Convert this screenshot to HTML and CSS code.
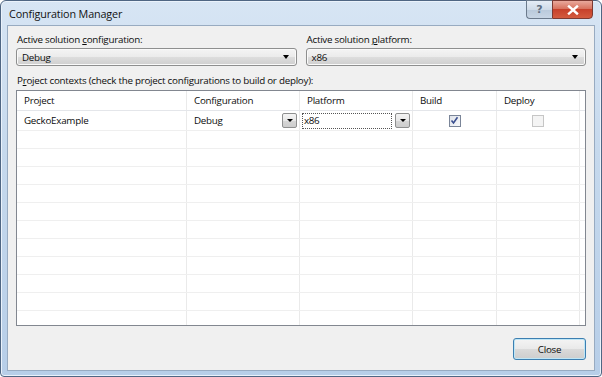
FILE: index.html
```html
<!DOCTYPE html>
<html>
<head>
<meta charset="utf-8">
<link rel="stylesheet" href="styles.css">
</head>
<body>
<div class="window">
  <div class="titlebar">
    <span class="title">Configuration Manager</span>
    <div class="caption">
      <div class="cap-btn help">?</div>
      <div class="cap-btn close">
        <svg width="12" height="10" viewBox="0 0 12 10"><path d="M2 1.5 L10 8.5 M10 1.5 L2 8.5" stroke="#fff" stroke-width="2.4" stroke-linecap="square"/></svg>
      </div>
    </div>
  </div>
  <div class="client">
    <div class="top-row">
      <div class="field">
        <div class="label">Active solution <u>c</u>onfiguration:</div>
        <div class="combo"><span>Debug</span><span class="arrow"></span></div>
      </div>
      <div class="field">
        <div class="label">Active solution <u>p</u>latform:</div>
        <div class="combo"><span>x86</span><span class="arrow"></span></div>
      </div>
    </div>
    <div class="label ctx">P<u>r</u>oject contexts (check the project configurations to build or deploy):</div>
    <div class="grid">
      <div class="row head">
        <div class="cell">Project</div>
        <div class="cell">Configuration</div>
        <div class="cell">Platform</div>
        <div class="cell">Build</div>
        <div class="cell">Deploy</div>
        <div class="cell"></div>
      </div>
      <div class="row first">
        <div class="cell">GeckoExample</div>
        <div class="cell split"><span>Debug</span><span class="dd"><span class="arrow"></span></span></div>
        <div class="cell split"><span class="edit">x86</span><span class="dd"><span class="arrow"></span></span></div>
        <div class="cell center"><span class="check on"><svg width="9" height="9" viewBox="0 0 9 9"><path d="M1.5 4.5 L3.5 7 L7.5 1.2" stroke="#3a4f8f" stroke-width="1.6" fill="none"/></svg></span></div>
        <div class="cell center"><span class="check off"></span></div>
        <div class="cell"></div>
      </div>
      <div class="row"><div class="cell"></div><div class="cell"></div><div class="cell"></div><div class="cell"></div><div class="cell"></div><div class="cell"></div></div>
      <div class="row"><div class="cell"></div><div class="cell"></div><div class="cell"></div><div class="cell"></div><div class="cell"></div><div class="cell"></div></div>
      <div class="row"><div class="cell"></div><div class="cell"></div><div class="cell"></div><div class="cell"></div><div class="cell"></div><div class="cell"></div></div>
      <div class="row"><div class="cell"></div><div class="cell"></div><div class="cell"></div><div class="cell"></div><div class="cell"></div><div class="cell"></div></div>
      <div class="row"><div class="cell"></div><div class="cell"></div><div class="cell"></div><div class="cell"></div><div class="cell"></div><div class="cell"></div></div>
      <div class="row"><div class="cell"></div><div class="cell"></div><div class="cell"></div><div class="cell"></div><div class="cell"></div><div class="cell"></div></div>
      <div class="row"><div class="cell"></div><div class="cell"></div><div class="cell"></div><div class="cell"></div><div class="cell"></div><div class="cell"></div></div>
      <div class="row"><div class="cell"></div><div class="cell"></div><div class="cell"></div><div class="cell"></div><div class="cell"></div><div class="cell"></div></div>
      <div class="row"><div class="cell"></div><div class="cell"></div><div class="cell"></div><div class="cell"></div><div class="cell"></div><div class="cell"></div></div>
      <div class="row"><div class="cell"></div><div class="cell"></div><div class="cell"></div><div class="cell"></div><div class="cell"></div><div class="cell"></div></div>
      <div class="row"><div class="cell"></div><div class="cell"></div><div class="cell"></div><div class="cell"></div><div class="cell"></div><div class="cell"></div></div>
    </div>
    <div class="footer">
      <div class="btn">Close</div>
    </div>
  </div>
</div>
</body>
</html>
```

FILE: styles.css
```css
* { box-sizing: border-box; }
html, body { margin: 0; padding: 0; }
body {
  width: 602px;
  height: 377px;
  overflow: hidden;
  font-family: "Open Sans", "Noto Sans", sans-serif;
  font-size: 9.8px;
  letter-spacing: -0.25px;
  color: #0c0c0c;
  background: #fff;
}
.window {
  width: 602px;
  height: 377px;
  border: 1px solid #4f6683;
  border-radius: 6px 6px 4px 4px;
  background: linear-gradient(180deg, #d7e5f4 0%, #c6d9ed 40%, #b7cee8 100%);
  display: flex;
  flex-direction: column;
  box-shadow: inset 0 0 0 1px #eaf2fb;
}
.titlebar {
  height: 24px;
  display: flex;
  align-items: flex-start;
  justify-content: space-between;
  padding-left: 8px;
  flex: none;
}
.title {
  margin-top: 5px;
  font-size: 10.8px;
  letter-spacing: -0.15px;
  color: #111;
}
.caption {
  display: flex;
  margin-right: 8px;
  margin-top: -1px;
}
.cap-btn {
  height: 19px;
  border: 1px solid #6b7a8c;
  display: flex;
  align-items: center;
  justify-content: center;
}
.help {
  width: 26px;
  border-radius: 0 0 0 4px;
  border-right: none;
  background: linear-gradient(180deg, #e5edf6 0%, #cfdbe8 50%, #b9c9db 51%, #c8d6e5 100%);
  color: #5f6f82;
  font-size: 11px;
  font-weight: bold;
  letter-spacing: 0;
  font-family: "DejaVu Sans", sans-serif;
}
.close {
  width: 41px;
  border-radius: 0 0 4px 0;
  border-color: #7d3a32;
  background: linear-gradient(180deg, #e9a99c 0%, #d8735f 45%, #c7412b 50%, #d45b3f 100%);
}
.client {
  flex: 1;
  margin: 0 6px 6px 6px;
  background: #f0f0f0;
  border: 1px solid #98abc1;
  padding: 6px 8px 10px 8px;
  display: flex;
  flex-direction: column;
}
.top-row {
  display: flex;
  gap: 9px;
}
.field {
  flex: 1;
  display: flex;
  flex-direction: column;
}
.label {
  height: 15px;
  line-height: 15px;
  padding-left: 1px;
  white-space: nowrap;
}
.combo {
  margin-top: 1px;
  height: 18px;
  border: 1px solid #8e8f8f;
  border-radius: 3px;
  background: linear-gradient(180deg, #f4f4f4 0%, #ebebeb 50%, #dddddd 51%, #cfcfcf 100%);
  display: flex;
  align-items: center;
  justify-content: space-between;
  padding: 0 7px 0 5px;
  box-shadow: inset 0 0 0 1px #fafafa;
}
.arrow {
  width: 0;
  height: 0;
  border-left: 3.5px solid transparent;
  border-right: 3.5px solid transparent;
  border-top: 4px solid #000;
}
.ctx {
  margin-top: 7px;
}
.grid {
  margin-top: 2px;
  height: 236px;
  border: 1px solid #828790;
  background: #fff;
  overflow: hidden;
  display: flex;
  flex-direction: column;
}
.row {
  display: grid;
  grid-template-columns: 170px 113px 113px 84px 83px 1fr;
  height: 18px;
  flex: none;
  border-bottom: 1px solid #efefef;
}
.row.head {
  height: 20px;
  border-bottom: 1px solid #e4e6ea;
}
.row.first { height: 20px; }
.cell {
  border-right: 1px solid #eaeaea;
  display: flex;
  align-items: center;
  padding-left: 7px;
  white-space: nowrap;
}
.cell:last-child { border-right: none; }
.split {
  justify-content: space-between;
  padding-right: 2px;
}
.first .split:nth-child(3) { padding-left: 2px; }
.dd {
  width: 15px;
  height: 15px;
  border: 1px solid #8e8f8f;
  border-radius: 2px;
  background: linear-gradient(180deg, #f4f4f4 0%, #e8e8e8 50%, #d6d6d6 51%, #cdcdcd 100%);
  display: flex;
  align-items: center;
  justify-content: center;
}
.dd .arrow {
  border-left-width: 3px;
  border-right-width: 3px;
  border-top-width: 3.5px;
}
.edit {
  width: 90px;
  height: 16px;
  border: 1px dotted #555;
  display: flex;
  align-items: center;
  padding-left: 1px;
  letter-spacing: -0.4px;
}
.center { justify-content: center; padding-left: 0; }
.check {
  width: 12px;
  height: 12px;
  border: 1px solid #8f8f8f;
  display: flex;
  align-items: center;
  justify-content: center;
}
.check.on {
  background: linear-gradient(135deg, #dfe3ea 0%, #f7f8fa 100%);
  border-color: #7a8598;
}
.check.off {
  border-color: #c6c6c6;
  background: #f4f4f4;
}
.footer {
  display: flex;
  justify-content: flex-end;
  margin-top: 12px;
}
.btn {
  width: 73px;
  height: 22px;
  border: 1px solid #3c7fb1;
  border-radius: 3px;
  background: linear-gradient(180deg, #f4f4f4 0%, #e9e9e9 50%, #dadada 51%, #cdcdcd 100%);
  box-shadow: inset 0 0 0 1px #bfe6f6;
  display: flex;
  align-items: center;
  justify-content: center;
}
```
